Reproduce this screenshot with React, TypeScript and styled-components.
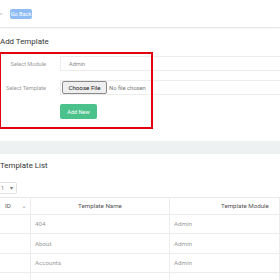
import styled, { createGlobalStyle } from "styled-components";

const GlobalStyle = createGlobalStyle`
  html, body {
    margin: 0;
    padding: 0;
    background: #fff;
    overflow: hidden;
  }
  body {
    font-family: Roboto, "Liberation Sans", sans-serif;
  }
`;

const Page = styled.div`
  width: 280px;
  height: 280px;
  overflow: hidden;
`;

const TopBar = styled.div`
  height: 28px;
  display: flex;
  align-items: center;
  gap: 7px;
  border-bottom: 1px solid #e8e8e8;
  box-shadow: 0 1px 2px rgba(0, 0, 0, 0.04);
  box-sizing: border-box;
`;

const Crumb = styled.span`
  font-size: 4px;
  color: #aaa;
  width: 3px;
`;

const GoBack = styled.button`
  height: 10px;
  width: 22px;
  padding: 0;
  border: none;
  border-radius: 2px;
  background: #8fbdf3;
  color: #fff;
  font-family: inherit;
  font-size: 5.6px;
  line-height: 10px;
`;

const SectionTitle = styled.h3<{ $top: number }>`
  margin: ${(p) => p.$top}px 0 0 0;
  font-size: 7.9px;
  line-height: 12px;
  font-weight: 400;
  color: #333;
`;

const FormArea = styled.div`
  position: relative;
  margin-top: 4px;
  padding: 4px 0 10px;
  display: flex;
  flex-direction: column;
  gap: 9px;
`;

const Highlight = styled.div`
  position: absolute;
  left: -1px;
  top: 0;
  width: 154px;
  height: 77px;
  border: 2px solid #e4000f;
  box-sizing: border-box;
  pointer-events: none;
`;

const Row = styled.div`
  display: grid;
  grid-template-columns: 60px 1fr;
  align-items: center;
  height: 15px;
`;

const Label = styled.label`
  font-size: 5.6px;
  color: #999;
  text-align: right;
  padding-right: 14px;
`;

const Field = styled.div`
  height: 15px;
  box-sizing: border-box;
  border: 1px solid #ececec;
  border-right: none;
  display: flex;
  align-items: center;
  padding-left: 1px;
  font-size: 5.6px;
  color: #888;
`;

const ModuleValue = styled.span`
  padding-left: 7px;
`;

const FileButton = styled.span`
  height: 13px;
  box-sizing: border-box;
  width: 45px;
  border: 1px solid #8a8a8a;
  border-radius: 2px;
  background: #efefef;
  color: #222;
  font-size: 6.2px;
  display: flex;
  align-items: center;
  justify-content: center;
`;

const FileNote = styled.span`
  margin-left: 2px;
  color: #777;
  font-size: 5.8px;
`;

const AddButton = styled.button`
  margin-left: 60px;
  width: 37px;
  height: 15px;
  padding: 0;
  border: none;
  border-radius: 2px;
  background: #4bc28c;
  color: #fff;
  font-family: inherit;
  font-size: 5.6px;
`;

const Band = styled.div`
  margin-top: 12px;
  height: 13px;
  background: #eef1f2;
`;

const PageSize = styled.div`
  margin-top: 10px;
  margin-left: -2px;
  width: 19px;
  height: 12px;
  box-sizing: border-box;
  border: 1px solid #e2e2e2;
  border-radius: 2px;
  display: flex;
  align-items: center;
  justify-content: space-between;
  padding: 0 3px 0 2px;
  font-size: 5.5px;
  color: #777;
`;

const Table = styled.div`
  margin-top: 3px;
  border-top: 1px solid #e8e8e8;
`;

const TRow = styled.div<{ $head?: boolean }>`
  display: grid;
  grid-template-columns: 31px 139px 1fr;
  height: ${(p) => (p.$head ? "17px" : "19.4px")};
  border-bottom: 1px solid #ececec;
  box-sizing: border-box;
`;

const Cell = styled.div<{ $head?: boolean; $center?: boolean }>`
  display: flex;
  align-items: center;
  justify-content: ${(p) => (p.$center ? "center" : "space-between")};
  padding: 0 4px 0 ${(p) => (p.$head && !p.$center ? "5px" : "4px")};
  font-size: 6.2px;
  color: ${(p) => (p.$head ? "#555" : "#9a9a9a")};
  border-right: 1px solid #ececec;
  overflow: hidden;
  white-space: nowrap;
`;

const ModuleHead = styled(Cell)`
  padding-left: 51px;
  justify-content: flex-start;
`;

const Sort = styled.span`
  font-size: 4px;
  color: #bbb;
`;

const rows = ["404", "About", "Accounts", "Customers"];

export default function App() {
  return (
    <Page>
      <GlobalStyle />
      <TopBar>
        <Crumb>n</Crumb>
        <GoBack>Go Back</GoBack>
      </TopBar>

      <SectionTitle $top={8}>Add Template</SectionTitle>
      <FormArea>
        <Highlight />
        <Row>
          <Label>Select Module</Label>
          <Field>
            <ModuleValue>Admin</ModuleValue>
          </Field>
        </Row>
        <Row>
          <Label>Select Template</Label>
          <Field>
            <FileButton>Choose File</FileButton>
            <FileNote>No file chosen</FileNote>
          </Field>
        </Row>
        <AddButton>Add New</AddButton>
      </FormArea>

      <Band />

      <SectionTitle $top={6}>Template List</SectionTitle>
      <PageSize>
        <span>1</span>
        <span>▾</span>
      </PageSize>

      <Table>
        <TRow $head>
          <Cell $head>
            ID <Sort>▲</Sort>
          </Cell>
          <Cell $head $center>
            Template Name
          </Cell>
          <ModuleHead $head>Template Module</ModuleHead>
        </TRow>
        {rows.map((r) => (
          <TRow key={r}>
            <Cell />
            <Cell>{r}</Cell>
            <Cell>Admin</Cell>
          </TRow>
        ))}
      </Table>
    </Page>
  );
}
